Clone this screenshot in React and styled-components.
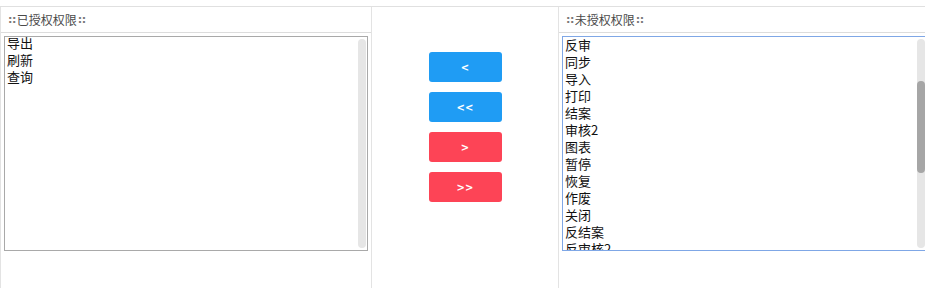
import styled, { createGlobalStyle } from "styled-components";

const GlobalStyle = createGlobalStyle`
  html, body {
    margin: 0;
    padding: 0;
    background: #fff;
    height: 100%;
  }
  #root {
    height: 100%;
  }
`;

const granted = ["导出", "刷新", "查询"];

// visible part of the list; the thumb shows it is scrolled a little way down
const notGranted = [
  "反审", "同步", "导入", "打印", "结案", "审核2", "图表", "暂停",
  "恢复", "作废", "关闭", "反结案", "反审核2",
];

const Page = styled.div`
  height: 100%;
  box-sizing: border-box;
  padding-top: 6px;
  font-family: "Noto Sans CJK SC", "Liberation Sans", sans-serif;
`;

const Layout = styled.div`
  display: grid;
  grid-template-columns: 372px 186px 1fr;
  height: 100%;
  box-sizing: border-box;
  border-top: 1px solid #e0e0e0;
`;

const Panel = styled.section`
  display: flex;
  flex-direction: column;
  border-left: 1px solid #e3e3e3;
  border-right: ${({ $last }) => ($last ? "none" : "1px solid #e3e3e3")};
  min-width: 0;
`;

const PanelHead = styled.div`
  height: 25px;
  display: flex;
  align-items: center;
  padding-left: 6px;
  border-bottom: 1px solid #dcdcdc;
  font-size: 12px;
  color: #4a4a4a;
`;

const Dots = styled.span`
  color: #7a7a7a;
  font-family: "DejaVu Sans", sans-serif;
  font-size: 11px;
  font-weight: bold;
  letter-spacing: -0.5px;
  margin: 0 1px;
`;

const ListBox = styled.div`
  margin: 3px 0 0 3px;
  width: ${({ $wide }) => ($wide ? "365px" : "364px")};
  height: 215px;
  box-sizing: border-box;
  border: 1px solid ${({ $focus }) => ($focus ? "#7fa7e6" : "#a9a9a9")};
  background: #fff;
  display: flex;
  overflow: hidden;
`;

const ListBody = styled.div`
  flex: 1;
  padding: 0 2px;
  margin-top: ${({ $offset }) => $offset}px;
  overflow: hidden;
  min-width: 0;
`;

const Item = styled.div`
  font-size: 13px;
  line-height: 17px;
  height: 17px;
  color: #111;
  white-space: nowrap;
`;

const Track = styled.div`
  width: 8px;
  margin: 2px 1px 2px 0;
  border-radius: 4px;
  background: #e6e6e6;
  display: flex;
  flex-direction: column;
`;

const Thumb = styled.div`
  width: 8px;
  border-radius: 4px;
  background: #a6a6a6;
`;

const ButtonColumn = styled.div`
  display: flex;
  flex-direction: column;
  align-items: center;
  gap: 10px;
  padding-top: 45px;
`;

const MoveButton = styled.button`
  width: 73px;
  height: 30px;
  border: none;
  border-radius: 3px;
  background: ${({ $tone }) => ($tone === "red" ? "#fd4456" : "#1f9cf4")};
  color: #fff;
  font-family: "DejaVu Sans", sans-serif;
  font-size: 10px;
  font-weight: bold;
  cursor: pointer;
  padding: 0;
`;

function PermissionList({ title, items, focus, wide, thumb, offset }) {
  return (
    <>
      <PanelHead>
        <Dots>::</Dots>
        {title}
        <Dots>::</Dots>
      </PanelHead>
      <ListBox $focus={focus} $wide={wide}>
        <ListBody $offset={offset}>
          {items.map((it) => (
            <Item key={it}>{it}</Item>
          ))}
        </ListBody>
        <Track>
          {thumb && (
            <Thumb style={{ marginTop: thumb.top, height: thumb.height }} />
          )}
        </Track>
      </ListBox>
    </>
  );
}

export default function App() {
  return (
    <Page>
      <GlobalStyle />
      <Layout>
        <Panel>
          <PermissionList title="已授权权限" items={granted} offset={-3} />
        </Panel>
        <ButtonColumn>
          <MoveButton>&lt;</MoveButton>
          <MoveButton>&lt;&lt;</MoveButton>
          <MoveButton $tone="red">&gt;</MoveButton>
          <MoveButton $tone="red">&gt;&gt;</MoveButton>
        </ButtonColumn>
        <Panel $last>
          <PermissionList
            title="未授权权限"
            items={notGranted}
            focus
            wide
            offset={-1}
            thumb={{ top: 42, height: 92 }}
          />
        </Panel>
      </Layout>
    </Page>
  );
}
